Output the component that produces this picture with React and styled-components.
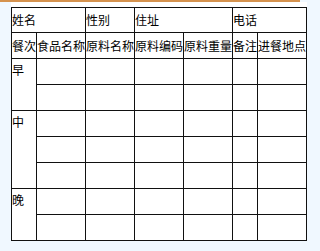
import React from 'react'
import styled, { createGlobalStyle } from 'styled-components'

const GlobalStyle = createGlobalStyle`
    body {
        margin: 0;
        background: #f0f8ff;
        font-family: "Noto Sans CJK SC", "Liberation Sans", sans-serif;
    }
`;

const TopBar = styled.div`
    width: 300px;
    height: 2px;
    background: #d5924e;
`;

const Sheet = styled.div`
    margin-left: 11px;
    width: 296px;
    padding-top: 5px;
    background: #fff;
`;

const Table = styled.table`
    border-collapse: collapse;
    border: 1px solid #111;
    font-size: 12px;
    line-height: 16px;
    color: #000;
`;

const Row = styled.tr`
    height: ${p => p.$h || 26}px;
`;

const Cell = styled.td`
    border: 1px solid #111;
    padding: 0;
    white-space: nowrap;
    vertical-align: ${p => (p.$top ? 'top' : 'middle')};
    padding-top: ${p => (p.$top ? '3px' : '0')};
`;

const headers = ['餐次', '食品名称', '原料名称', '原料编码', '原料重量', '备注', '进餐地点'];

const meals = [
    { name: '早', rows: 2 },
    { name: '中', rows: 3 },
    { name: '晚', rows: 2 },
];

function EmptyCells() {
    return [0, 1, 2, 3, 4, 5].map(i => <Cell key={i} />);
}

export default function App() {
    return (
        <>
            <GlobalStyle />
            <TopBar />
            <Sheet>
                <Table>
                    <tbody>
                        <Row $h={25}>
                            <Cell colSpan={2}>姓名</Cell>
                            <Cell>性别</Cell>
                            <Cell colSpan={2}>住址</Cell>
                            <Cell colSpan={2}>电话</Cell>
                        </Row>
                        <Row>
                            {headers.map(h => (
                                <Cell key={h}>{h}</Cell>
                            ))}
                        </Row>
                        {meals.map(m =>
                            Array.from({ length: m.rows }).map((_, i) => (
                                <Row key={m.name + i}>
                                    {i === 0 && (
                                        <Cell $top rowSpan={m.rows}>
                                            {m.name}
                                        </Cell>
                                    )}
                                    <EmptyCells />
                                </Row>
                            ))
                        )}
                    </tbody>
                </Table>
            </Sheet>
        </>
    )
}
